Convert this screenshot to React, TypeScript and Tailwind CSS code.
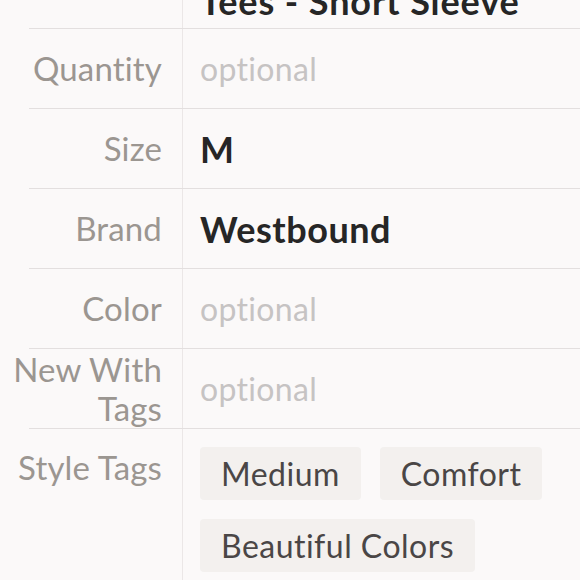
const rows = [
  { label: "Quantity", value: "optional", muted: true },
  { label: "Size", value: "M" },
  { label: "Brand", value: "Westbound" },
  { label: "Color", value: "optional", muted: true },
  { label: "New With Tags", value: "optional", muted: true },
];

const styleTags = ["Medium", "Comfort", "Beautiful Colors"];

function Row({ label, children, className = "" }: { label?: string; children: React.ReactNode; className?: string }) {
  return (
    <div className={`ml-[29px] flex border-b border-[#e3dfdf] ${className}`}>
      <div className="-ml-[29px] w-[183px] shrink-0 border-r border-[#ebe7e7] pr-5 flex items-center justify-end text-right text-[33px] leading-[39px] tracking-[0.005em] text-[#9b9691]">
        {label}
      </div>
      <div className="flex-1 pl-[17px] flex items-center">{children}</div>
    </div>
  );
}

export default function App() {
  return (
    <div
      className="min-h-screen w-full overflow-hidden bg-[#fbf9f9] [font-variant-ligatures:none]"
      style={{ fontFamily: "Lato, 'Noto Sans', sans-serif" }}
    >
      <Row className="-mt-[26px] h-[55px]">
        <span className="text-[36px] font-bold tracking-[0.025em] text-[#262626] whitespace-nowrap">Tees - Short Sleeve</span>
      </Row>
      {rows.map((r) => (
        <Row key={r.label} label={r.label} className="h-[80px]">
          <span
            className={
              r.muted
                ? "text-[32px] tracking-[0.01em] text-[#c6c3c3]"
                : "text-[36px] font-bold tracking-[0.015em] text-[#262626]"
            }
          >
            {r.value}
          </span>
        </Row>
      ))}
      <div className="flex">
        <div className="w-[183px] shrink-0 border-r border-[#ebe7e7] pr-5 pt-[18px] text-right text-[33px] leading-[40px] tracking-[0.005em] text-[#9b9691]">
          Style Tags
        </div>
        <div className="flex-1 pl-[17px] pt-[18px] pb-6 flex flex-wrap gap-[19px]">
          {styleTags.map((t) => (
            <span
              key={t}
              className="h-[53px] rounded-[4px] bg-[#f3f0ee] px-[21px] flex items-center text-[32px] tracking-[0.015em] text-[#4a4646]"
            >
              {t}
            </span>
          ))}
        </div>
      </div>
    </div>
  );
}
